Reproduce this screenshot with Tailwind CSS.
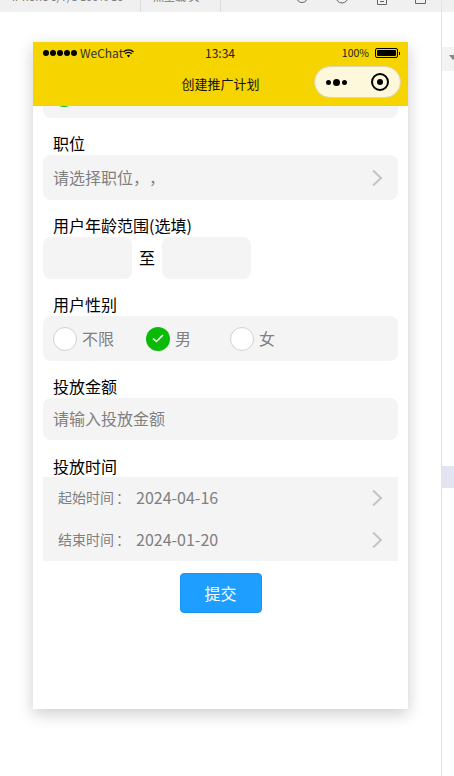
<!DOCTYPE html>
<html lang="zh">
<head>
    <meta charset="UTF-8">
    <meta name="viewport" content="width=device-width, initial-scale=1.0">
    <script src="https://cdn.jsdelivr.net/npm/@tailwindcss/browser@4"></script>
</head>
<body class="bg-white font-['Noto_Sans_CJK_SC','Noto_Sans',sans-serif] text-black [text-spacing-trim:space-all]">
<div class="flex h-[776px] w-[454px] overflow-hidden">
    <!-- simulator column -->
    <div class="w-[441px] shrink-0 flex flex-col">
        <!-- devtools toolbar, cut off by the crop -->
        <div class="h-3 shrink-0 bg-[#f0f0f0] flex overflow-hidden">
            <div class="w-[141px] h-3 border-r border-[#dcdcdc] pl-3 overflow-hidden">
                <span class="block -mt-[11px] text-[11px] leading-[14px] text-[#777] whitespace-nowrap">iPhone 6/7/8 100% 16</span>
            </div>
            <div class="w-[80px] h-3 border-r border-[#dcdcdc] pl-[12px] overflow-hidden">
                <span class="block -mt-[11px] text-[11px] leading-[14px] text-[#777] whitespace-nowrap">热重载 关</span>
            </div>
            <div class="flex-1 h-3 flex overflow-hidden pl-[74px]">
                <svg class="w-[14px] h-[14px] -mt-[10px] shrink-0" viewBox="0 0 14 14" fill="none" stroke="#666"><path d="M12.500 7a5.500 5.500 0 1 1-11 0"/></svg>
                <svg class="w-[14px] h-[14px] -mt-[10px] ml-[26px] shrink-0" viewBox="0 0 14 14" fill="none" stroke="#666"><circle cx="7" cy="7" r="6"/><path d="M4 9h6"/></svg>
                <svg class="w-[10px] h-[14px] -mt-[9px] ml-[28px] shrink-0" viewBox="0 0 10 14" fill="none" stroke="#666"><path d="M.5.5h9v13h-9zM3 10.500h4"/></svg>
                <svg class="w-[11px] h-[14px] -mt-[10px] ml-[28px] shrink-0" viewBox="0 0 11 14" fill="none" stroke="#666"><path d="M.5.5v13h10V.5"/></svg>
            </div>
        </div>

        <div class="pt-[30px] pl-[33px]">
            <!-- phone -->
            <div class="w-[375px] h-[667px] bg-white shadow-[0_5px_15px_rgba(0,0,0,0.2)] flex flex-col overflow-hidden">
                <header class="relative z-10 h-16 shrink-0 bg-[#f5d400] flex flex-col">
                    <div class="h-[21px] flex items-center text-[12px] leading-4 pl-[10px] pr-[8px] relative">
                        <span class="flex gap-[1px] mt-[1px]">
                            <i class="w-[6px] h-[6px] rounded-full bg-black"></i>
                            <i class="w-[6px] h-[6px] rounded-full bg-black"></i>
                            <i class="w-[6px] h-[6px] rounded-full bg-black"></i>
                            <i class="w-[6px] h-[6px] rounded-full bg-black"></i>
                            <i class="w-[6px] h-[6px] rounded-full bg-black"></i>
                        </span>
                        <span class="ml-[3px] text-[#333]">WeChat</span>
                        <svg class="w-[11px] h-[9px] mt-[1px]" viewBox="0 0 11 9" fill="none" stroke="#000" stroke-width="1.300"><path d="M.5 3a7 7 0 0 1 10 0M2.200 4.800a4.600 4.600 0 0 1 6.600 0"/><path d="M5.500 8.500 3.900 6.500a2.400 2.400 0 0 1 3.200 0z" fill="#000" stroke="none"/></svg>
                        <span class="absolute left-[172px] text-[#222]">13:34</span>
                        <span class="ml-auto text-[10.500px] text-[#222] mt-[1px]">100%</span>
                        <span class="ml-[6px] w-[23px] h-[10px] border border-black rounded-[2px] p-[1px] flex mt-[1px]">
                            <i class="flex-1 bg-black rounded-[1px]"></i>
                        </span>
                        <i class="w-[1px] h-[3px] bg-black ml-[1px] mt-[1px]"></i>
                    </div>
                    <div class="flex-1 relative flex items-center justify-center text-[13px] text-[#111]">
                        <span class="-mt-[2px]">创建推广计划</span>
                        <!-- capsule menu -->
                        <div class="absolute right-[7px] top-[3px] w-[87px] h-[32px] rounded-full bg-[#fdf8dc] border border-[#dcd7b0] flex items-center">
                            <div class="w-[43px] flex items-center justify-center gap-[2px]">
                                <i class="w-[5px] h-[5px] rounded-full bg-black"></i>
                                <i class="w-[7px] h-[7px] rounded-full bg-black"></i>
                                <i class="w-[5px] h-[5px] rounded-full bg-black"></i>
                            </div>
                            <i class="w-[1px] h-[20px] bg-[#fbf6d5]"></i>
                            <div class="flex-1 flex items-center justify-center">
                                <span class="w-[18px] h-[18px] rounded-full border-2 border-black flex items-center justify-center">
                                    <i class="w-[6px] h-[6px] rounded-full bg-black"></i>
                                </span>
                            </div>
                        </div>
                    </div>
                </header>

                <main class="px-[10px] text-[16px] leading-4">
                    <!-- row scrolled under the header -->
                    <div class="h-[12px] rounded-b-lg bg-[#f4f4f4] relative overflow-hidden">
                        <i class="absolute left-[10px] -top-[21px] w-[22px] h-[22px] rounded-full bg-[#09bb07]"></i>
                    </div>

                    <p class="pl-[10px] mt-[18px] h-[19px] leading-[14px]">职位</p>
                    <div class="h-[45px] rounded-lg bg-[#f4f4f4] pl-[10px] pr-[15px] flex items-center justify-between text-[#808080]">
                        <span class="-mt-[2px]">请选择职位，，</span>
                        <svg class="w-[12px] h-[18px]" viewBox="0 0 12 18" fill="none" stroke="#c4c4c4" stroke-width="2"><path d="m2 1.500 8 7.500-8 7.500"/></svg>
                    </div>

                    <p class="pl-[10px] mt-[18px] h-[19px] leading-[14px]">用户年龄范围(选填)</p>
                    <div class="flex items-center">
                        <div class="w-[89px] h-[42px] rounded-lg bg-[#f4f4f4]"></div>
                        <span class="w-[30px] text-center -mt-[2px]">至</span>
                        <div class="w-[89px] h-[42px] rounded-lg bg-[#f4f4f4]"></div>
                    </div>

                    <p class="pl-[10px] mt-[18px] h-[19px] leading-[14px]">用户性别</p>
                    <div class="h-[45px] rounded-lg bg-[#f4f4f4] pl-[10px] flex items-center text-[#808080]">
                        <div class="w-[93px] flex items-center gap-[5px]">
                            <i class="w-6 h-6 rounded-full bg-white border border-[#d1d1d1]"></i>
                            <span class="-mt-[2px]">不限</span>
                        </div>
                        <div class="w-[84px] flex items-center gap-[5px]">
                            <span class="w-6 h-6 rounded-full bg-[#09bb07] flex items-center justify-center">
                                <svg class="w-[14px] h-[11px]" viewBox="0 0 14 11" fill="none" stroke="#fff" stroke-width="1.600"><path d="m2 5.500 3.500 3 6.500-6.500"/></svg>
                            </span>
                            <span class="-mt-[2px]">男</span>
                        </div>
                        <div class="flex items-center gap-[5px]">
                            <i class="w-6 h-6 rounded-full bg-white border border-[#d1d1d1]"></i>
                            <span class="-mt-[2px]">女</span>
                        </div>
                    </div>

                    <p class="pl-[10px] mt-[18px] h-[19px] leading-[14px]">投放金额</p>
                    <div class="h-[42px] rounded-lg bg-[#f4f4f4] px-[10px] flex items-center text-[#808080]">
                        <span class="-mt-[2px]">请输入投放金额</span>
                    </div>

                    <p class="pl-[10px] mt-[19px] h-[18px] leading-[14px]">投放时间</p>
                    <div class="bg-[#f4f4f4] text-[#808080]">
                        <div class="h-[42px] px-[15px] flex items-center">
                            <span class="w-[78px] text-[14px] -mt-[2px]">起始时间<span class="ml-[2px]">：</span></span>
                            <span class="flex-1 -mt-[2px]">2024-04-16</span>
                            <svg class="w-[12px] h-[18px]" viewBox="0 0 12 18" fill="none" stroke="#c4c4c4" stroke-width="2"><path d="m2 1.500 8 7.500-8 7.500"/></svg>
                        </div>
                        <div class="h-[42px] px-[15px] flex items-center">
                            <span class="w-[78px] text-[14px] -mt-[2px]">结束时间<span class="ml-[2px]">：</span></span>
                            <span class="flex-1 -mt-[2px]">2024-01-20</span>
                            <svg class="w-[12px] h-[18px]" viewBox="0 0 12 18" fill="none" stroke="#c4c4c4" stroke-width="2"><path d="m2 1.500 8 7.500-8 7.500"/></svg>
                        </div>
                    </div>

                    <button class="block mx-auto mt-[12px] w-[82px] h-10 rounded bg-[#1e9fff] border border-[#1a94ef] text-white">提交</button>
                </main>
            </div>
        </div>
    </div>

    <!-- devtools side panel -->
    <div class="flex-1 min-w-0 border-l border-[#e3e3e3] flex flex-col">
        <div class="h-3 shrink-0 bg-[#f0f0f0]"></div>
        <div class="mt-[35px] h-6 bg-[#f3f3f3] pl-[7px] pt-2">
            <i class="block w-0 h-0 border-x-[4px] border-x-transparent border-t-[5px] border-t-[#888]"></i>
        </div>
        <div class="mt-[395px] h-[22px] bg-[#e2e4f2]"></div>
    </div>
</div>
</body>
</html>
